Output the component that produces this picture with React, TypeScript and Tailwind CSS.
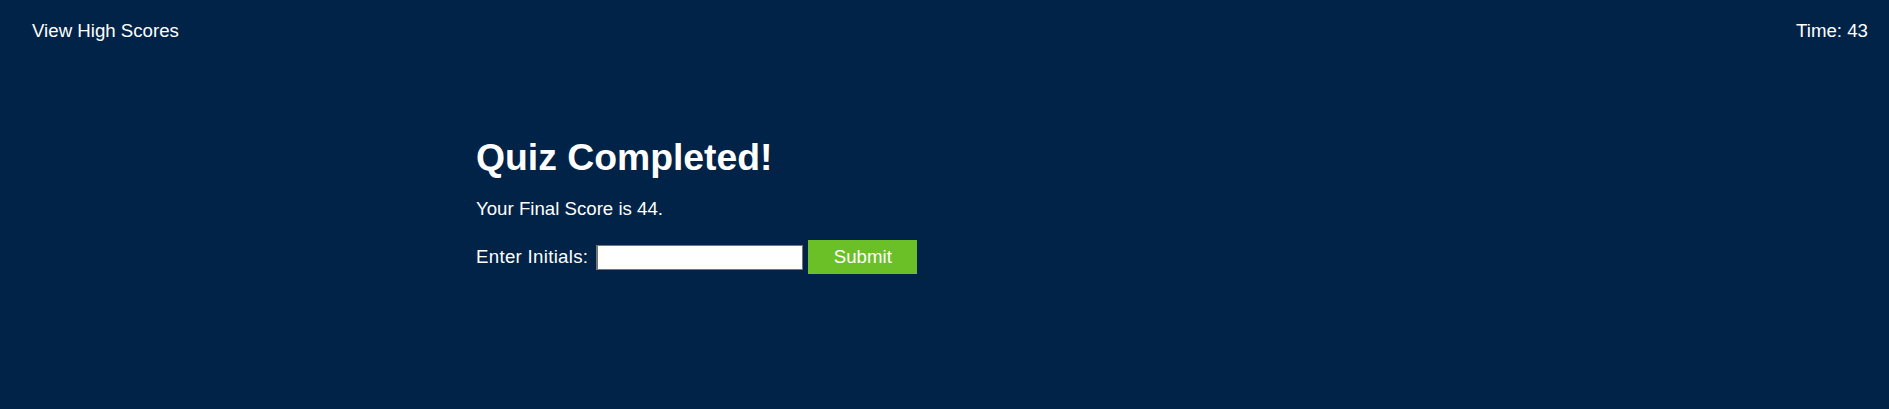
import React from "react";

export default function App() {
  return (
    <div
      className="min-h-[409px] w-full bg-[#002347] text-white"
      style={{ fontFamily: '"Liberation Sans", Arial, sans-serif' }}
    >
      <header className="flex justify-between pt-[20px] pl-[32px] pr-[21px] text-[18.67px] leading-[22px]">
        <a className="cursor-pointer">View High Scores</a>
        <span>Time: 43</span>
      </header>
      <main className="mx-auto w-[937px] pt-[94px]">
        <h1 className="text-[37.33px] font-bold leading-[42px]">Quiz Completed!</h1>
        <p className="mt-[20px] text-[18.67px] leading-[22px]">Your Final Score is 44.</p>
        <form
          className="mt-[20px] flex items-center text-[18.67px] leading-[22px]"
          onSubmit={(e) => e.preventDefault()}
        >
          <label htmlFor="initials" className="tracking-[0.3px]">Enter Initials:</label>
          <input
            id="initials"
            type="text"
            className="ml-[8px] h-[25px] w-[207px] border border-l-2 border-[#767676] bg-white px-[2px] text-black outline-none"
          />
          <button
            type="submit"
            className="ml-[5px] h-[34px] w-[109px] bg-[#6bbf27] text-white"
          >
            Submit
          </button>
        </form>
      </main>
    </div>
  );
}
